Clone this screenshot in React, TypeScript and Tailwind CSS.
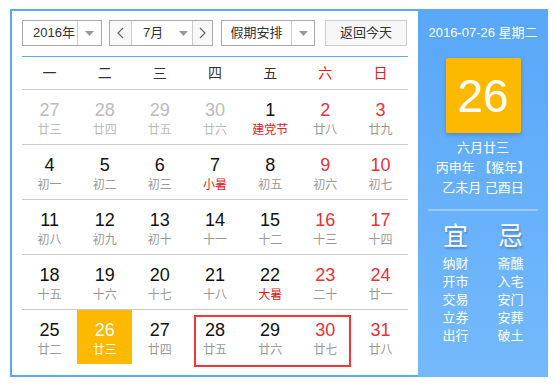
import React from "react";

type Cell = { d: number; l: string; dim?: boolean; red?: boolean; lred?: boolean; today?: boolean };

const rows: Cell[][] = [
  [
    { d: 27, l: "廿三", dim: true },
    { d: 28, l: "廿四", dim: true },
    { d: 29, l: "廿五", dim: true },
    { d: 30, l: "廿六", dim: true },
    { d: 1, l: "建党节", lred: true },
    { d: 2, l: "廿八", red: true },
    { d: 3, l: "廿九", red: true },
  ],
  [
    { d: 4, l: "初一" },
    { d: 5, l: "初二" },
    { d: 6, l: "初三" },
    { d: 7, l: "小暑", lred: true },
    { d: 8, l: "初五" },
    { d: 9, l: "初六", red: true },
    { d: 10, l: "初七", red: true },
  ],
  [
    { d: 11, l: "初八" },
    { d: 12, l: "初九" },
    { d: 13, l: "初十" },
    { d: 14, l: "十一" },
    { d: 15, l: "十二" },
    { d: 16, l: "十三", red: true },
    { d: 17, l: "十四", red: true },
  ],
  [
    { d: 18, l: "十五" },
    { d: 19, l: "十六" },
    { d: 20, l: "十七" },
    { d: 21, l: "十八" },
    { d: 22, l: "大暑", lred: true },
    { d: 23, l: "二十", red: true },
    { d: 24, l: "廿一", red: true },
  ],
  [
    { d: 25, l: "廿二" },
    { d: 26, l: "廿三", today: true },
    { d: 27, l: "廿四" },
    { d: 28, l: "廿五" },
    { d: 29, l: "廿六" },
    { d: 30, l: "廿七", red: true },
    { d: 31, l: "廿八", red: true },
  ],
];

const weekdays = ["一", "二", "三", "四", "五", "六", "日"];

function Caret() {
  return (
    <svg width="9" height="5" viewBox="0 0 9 5">
      <path d="M0 0 L9 0 L4.5 5 Z" fill="#999" />
    </svg>
  );
}

function Chevron({ dir }: { dir: "l" | "r" }) {
  return (
    <svg width="7" height="12" viewBox="0 0 7 12">
      <path
        d={dir === "l" ? "M6 1 L1 6 L6 11" : "M1 1 L6 6 L1 11"}
        fill="none"
        stroke="#666"
        strokeWidth="1.2"
      />
    </svg>
  );
}

function CellView({ c }: { c: Cell }) {
  let numColor = "text-[#111]";
  let lunColor = "text-[#999]";
  if (c.dim) {
    numColor = "text-[#bbb]";
    lunColor = "text-[#bbb]";
  } else if (c.red) {
    numColor = "text-[#e8313a]";
  }
  if (c.lred) lunColor = "text-[#e02020]";
  if (c.today) {
    numColor = "text-white";
    lunColor = "text-white";
  }
  return (
    <div className={`h-[54px] flex flex-col items-center pt-[10px] ${c.today ? "bg-[#fcb900]" : ""}`}>
      <div className={`text-[18px] leading-[20px] ${numColor}`}>{c.d}</div>
      <div className={`text-[12px] leading-[18px] mt-[1px] ${lunColor}`}>{c.l}</div>
    </div>
  );
}

export default function App() {
  return (
    <div
      className="w-[556px] h-[387px] bg-white pt-[9px] pl-[10px]"
      style={{ fontFamily: '"Liberation Sans", "Noto Sans CJK SC", sans-serif' }}
    >
      <div className="flex w-[538px] h-[368px]">
        {/* Left calendar */}
        <div className="w-[408px] h-full border-2 border-r-0 border-[#5ca8f6] pt-[9px] px-[10px] pb-[10px] flex flex-col">
          {/* Header controls */}
          <div className="flex h-[26px] text-[13px] text-[#333] whitespace-nowrap">
            <div className="w-[80px] h-full border border-[#a9a9a9] flex">
              <div className="w-[54px] flex items-center pl-[10px] whitespace-nowrap">2016年</div>
              <div className="flex-1 border-l border-[#ccc] flex items-center justify-center">
                <Caret />
              </div>
            </div>
            <div className="w-[104px] ml-[7px] h-full border border-[#a9a9a9] flex">
              <div className="w-[22px] border-r border-[#ccc] bg-[#f8f8f8] flex items-center justify-center">
                <Chevron dir="l" />
              </div>
              <div className="w-[60px] flex items-center pl-[11px]">
                <span>7月</span>
                <span className="ml-[16px] flex">
                  <Caret />
                </span>
              </div>
              <div className="flex-1 border-l border-[#ccc] bg-[#f8f8f8] flex items-center justify-center">
                <Chevron dir="r" />
              </div>
            </div>
            <div className="w-[94px] ml-[8px] h-full border border-[#a9a9a9] flex">
              <div className="w-[69px] flex items-center justify-center">假期安排</div>
              <div className="flex-1 border-l border-[#ccc] flex items-center justify-center">
                <Caret />
              </div>
            </div>
            <div className="w-[82px] ml-[10px] h-full border border-[#ccc] bg-[#f7f7f7] flex items-center justify-center">
              返回今天
            </div>
          </div>
          <div className="mt-[10px] h-px bg-[#5ca8f6]" />
          {/* Weekdays */}
          <div className="grid grid-cols-7 h-[33px] border-b border-[#ccc] text-[14px]">
            {weekdays.map((w, i) => (
              <div
                key={w}
                className={`flex items-center justify-center ${i >= 5 ? "text-[#e02020]" : "text-[#333]"}`}
              >
                {w}
              </div>
            ))}
          </div>
          {/* Days */}
          {rows.map((r, ri) => (
            <div
              key={ri}
              className={`relative grid grid-cols-7 ${ri < 4 ? "border-b border-[#ccc]" : ""}`}
            >
              {r.map((c, ci) => (
                <CellView key={ci} c={c} />
              ))}
              {ri === 4 && (
                <div className="absolute left-[172px] top-[5px] w-[157px] h-[52px] border-2 border-[#f33636]" />
              )}
            </div>
          ))}
        </div>
        {/* Right panel */}
        <div className="w-[130px] h-full bg-gradient-to-b from-[#58a7f9] to-[#74b9fc] text-white flex flex-col items-center pt-[15px]">
          <div className="text-[13px] leading-[18px] whitespace-nowrap">2016-07-26 星期二</div>
          <div className="mt-[16px] w-[75px] h-[75px] bg-[#fcb900] rounded-[2px] shadow-[0_2px_4px_rgba(0,0,0,0.2)] flex items-center justify-center text-[46px] leading-none">
            26
          </div>
          <div className="mt-[5px] text-[13px] leading-[20px] text-center whitespace-nowrap">
            <div>六月廿三</div>
            <div>丙申年 【猴年】</div>
            <div>乙未月 己酉日</div>
          </div>
          <div className="mt-[11px] w-[110px] h-[2px] bg-[#9ccbfb]" />
          <div className="mt-[10px] w-[110px] grid grid-cols-2">
            {[
              { t: "宜", items: ["纳财", "开市", "交易", "立券", "出行"] },
              { t: "忌", items: ["斋醮", "入宅", "安门", "安葬", "破土"] },
            ].map((col) => (
              <div key={col.t} className="flex flex-col items-center">
                <div className="text-[25px] leading-[30px] [text-shadow:1px_2px_2px_rgba(0,0,0,0.25)]">
                  {col.t}
                </div>
                <div className="mt-[4px] text-[13px] leading-[18px] text-center">
                  {col.items.map((it) => (
                    <div key={it}>{it}</div>
                  ))}
                </div>
              </div>
            ))}
          </div>
        </div>
      </div>
    </div>
  );
}
